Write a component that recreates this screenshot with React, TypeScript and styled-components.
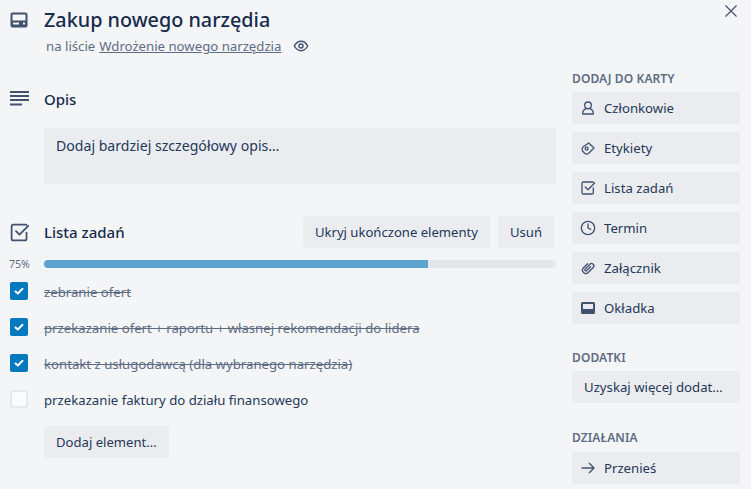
import React from "react";
import styled, { createGlobalStyle } from "styled-components";

const Global = createGlobalStyle`
  html, body { margin: 0; padding: 0; background: #f4f5f7; }
  body { font-family: "Noto Sans", "Open Sans", sans-serif; color: #253858; overflow: hidden; }
`;

const Card = styled.div`
  width: 751px;
  height: 489px;
  position: relative;
  overflow: hidden;
  background: #f4f5f7;
  display: grid;
  grid-template-columns: 556px 168px;
  column-gap: 16px;
`;

const Main = styled.main`
  display: flex;
  flex-direction: column;
  padding-top: 6px;
`;

const Row = styled.div<{ $top?: number }>`
  display: grid;
  grid-template-columns: 44px 1fr;
  align-items: center;
  margin-top: ${(p) => p.$top ?? 0}px;
`;

const IconCell = styled.div`
  display: flex;
  align-items: center;
  padding-left: 9px;
  color: #42526e;
`;

const Title = styled.h1`
  margin: 0;
  font-size: 19.8px;
  line-height: 28px;
  font-weight: 500;
  color: #172b4d;
`;

const Sub = styled.div`
  grid-column: 2;
  display: flex;
  align-items: center;
  padding-left: 2px;
  margin-top: 2px;
  height: 20px;
  font-size: 13.2px;
  color: #5e6c84;
  a {
    color: #5e6c84;
    text-decoration: underline;
    margin-left: 4px;
  }
  svg {
    margin-left: 12px;
  }
`;

const SectionTitle = styled.h2`
  margin: 0;
  font-size: 15px;
  line-height: 24px;
  font-weight: 500;
  color: #172b4d;
  flex: 1;
`;

const DescBox = styled.div`
  grid-column: 2;
  height: 56px;
  box-sizing: border-box;
  padding: 8px 12px;
  background: #ebecf0;
  border-radius: 3px;
  font-size: 14.1px;
  line-height: 20px;
`;

const ChecklistHead = styled.div`
  display: flex;
  align-items: center;
  padding-right: 2px;
`;

const Btn = styled.button<{ $ml?: number }>`
  height: 32px;
  border: 0;
  border-radius: 3px;
  background: #ebecf0;
  padding: 0 12px;
  margin-left: ${(p) => p.$ml ?? 0}px;
  font-family: inherit;
  font-size: 13.1px;
  color: #253858;
  white-space: nowrap;
`;

const ProgressRow = styled.div`
  display: grid;
  grid-template-columns: 44px 1fr;
  align-items: center;
  margin-top: 8px;
  height: 16px;
`;

const Pct = styled.span`
  font-size: 10.5px;
  color: #5e6c84;
  padding-left: 9px;
`;

const Track = styled.div`
  height: 8px;
  background: #e4e6ea;
  border-radius: 4px;
  overflow: hidden;
`;

const Fill = styled.div`
  height: 100%;
  background: #5ba4cf;
`;

const ItemList = styled.div`
  display: flex;
  flex-direction: column;
  margin-top: 1px;
`;

const Item = styled.div`
  display: grid;
  grid-template-columns: 44px 1fr;
  align-items: center;
  height: 36px;
`;

const BoxCell = styled.div`
  padding-left: 10px;
  display: flex;
`;

const Check = styled.span<{ $on?: boolean }>`
  width: 18px;
  height: 18px;
  box-sizing: border-box;
  border-radius: 2px;
  display: flex;
  align-items: center;
  justify-content: center;
  background: ${(p) => (p.$on ? "#0079bf" : "#fafbfc")};
  border: ${(p) => (p.$on ? "0" : "2px solid #e6e8ec")};
`;

const ItemText = styled.span<{ $done?: boolean }>`
  font-size: 13.2px;
  padding-top: 2px;
  color: ${(p) => (p.$done ? "#5e6c84" : "#253858")};
  text-decoration: ${(p) => (p.$done ? "line-through" : "none")};
`;

const AddRow = styled.div`
  padding-left: 44px;
  margin-top: 9px;
`;

const Side = styled.aside`
  display: flex;
  flex-direction: column;
  padding-top: 71px;
`;

const SideLabel = styled.h3<{ $top?: number; $gap?: number }>`
  margin: ${(p) => p.$top ?? 0}px 0 ${(p) => p.$gap ?? 5}px;
  font-size: 12px;
  line-height: 16px;
  font-weight: 600;
  letter-spacing: 0.1px;
  color: #5e6c84;
  text-transform: uppercase;
`;

const SideBtns = styled.div`
  display: flex;
  flex-direction: column;
  gap: 8px;
`;

const SideBtn = styled.button`
  height: 32px;
  border: 0;
  border-radius: 3px;
  background: #ebecf0;
  padding: 0 0 0 8px;
  display: flex;
  align-items: center;
  gap: 8px;
  font-family: inherit;
  font-size: 13.2px;
  color: #253858;
  text-align: left;
  white-space: nowrap;
  svg {
    color: #42526e;
    flex: none;
  }
`;

const PlainSideBtn = styled(SideBtn)`
  padding-left: 12px;
`;

const Close = styled.button`
  position: absolute;
  right: 13px;
  top: 4px;
  width: 14px;
  height: 14px;
  padding: 0;
  border: 0;
  background: none;
  color: #42526e;
  display: flex;
`;

const Ico = ({ size = 16, children }: { size?: number; children: React.ReactNode }) => (
  <svg width={size} height={size} viewBox="0 0 24 24" fill="none" stroke="currentColor" strokeWidth={2} strokeLinecap="round" strokeLinejoin="round">
    {children}
  </svg>
);

const CoverIcon = () => (
  <svg width="20" height="20" viewBox="0 0 20 20" fill="currentColor">
    <path fillRule="evenodd" d="M3.500 2.500h13a2 2 0 0 1 2 2v11a2 2 0 0 1-2 2h-13a2 2 0 0 1-2-2v-11a2 2 0 0 1 2-2zM3.500 4.500v6h13v-6zM4 12.500v2h6v-2zM14 12.500v2h2v-2z" />
  </svg>
);

const ChecklistIcon = ({ size = 16 }: { size?: number }) => (
  <Ico size={size}>
    <path d="M20 12v7a2 2 0 0 1-2 2H5a2 2 0 0 1-2-2V5a2 2 0 0 1 2-2h14a2 2 0 0 1 1 .5" />
    <path d="M8 10.500l4 4 10-10" />
  </Ico>
);

const Tick = () => (
  <svg width="12" height="12" viewBox="0 0 12 12" fill="none" stroke="#fff" strokeWidth="2" strokeLinecap="round" strokeLinejoin="round">
    <path d="M2.500 6.500l2.300 2 4.700-4.700" />
  </svg>
);

const sideActions: { label: string; icon: React.ReactNode }[] = [
  { label: "Członkowie", icon: <Ico><circle cx="12" cy="8" r="5" /><path d="M4 21c0-4 2-7 5-8h6c3 1 5 4 5 8z" /></Ico> },
  { label: "Etykiety", icon: <Ico><path d="M13 4.500l8 7.500-8 8c-2 1.500-4 1.500-6 0l-3-3c-1.500-2-1.500-4 0-6z" /><circle cx="10" cy="13" r="2.200" /></Ico> },
  { label: "Lista zadań", icon: <ChecklistIcon /> },
  { label: "Termin", icon: <Ico><circle cx="12" cy="12" r="10" /><path d="M12 6v6l4 2" /></Ico> },
  { label: "Załącznik", icon: <Ico><g transform="rotate(45 12 12)"><path d="M7 8v8.500a5 5 0 0 0 10 0V6a3.500 3.500 0 0 0-7 0v10a1.700 1.700 0 0 0 3.400 0V8" /></g></Ico> },
  { label: "Okładka", icon: <svg width="16" height="16" viewBox="0 0 16 16" fill="currentColor"><path fillRule="evenodd" d="M2.500 2h11A1.500 1.500 0 0 1 15 3.500v9a1.500 1.500 0 0 1-1.500 1.500h-11A1.500 1.500 0 0 1 1 12.500v-9A1.500 1.500 0 0 1 2.500 2zM3 4v5h10V4H3z" /></svg> },
];

const items = [
  { text: "zebranie ofert", done: true },
  { text: "przekazanie ofert + raportu + własnej rekomendacji do lidera", done: true },
  { text: "kontakt z usługodawcą (dla wybranego narzędzia)", done: true },
  { text: "przekazanie faktury do działu finansowego", done: false },
];

export default function App() {
  return (
    <>
      <Global />
      <Card>
        <Main>
          <Row>
            <IconCell><CoverIcon /></IconCell>
            <Title>Zakup nowego narzędia</Title>
            <Sub>
              na liście <a>Wdrożenie nowego narzędzia</a>
              <svg width="16" height="16" viewBox="0 0 24 24" fill="none" stroke="#42526e" strokeWidth="2.200"><path d="M2 12c2.500-4.500 6-7 10-7s7.500 2.500 10 7c-2.500 4.500-6 7-10 7s-7.500-2.500-10-7z" /><circle cx="12" cy="12" r="3" /></svg>
            </Sub>
          </Row>
          <Row $top={31}>
            <IconCell>
              <svg width="20" height="20" viewBox="0 0 20 20" fill="currentColor"><path d="M1 2h19v2H1zM1 6h19v2H1zM1 10h19v2H1zM1 14.500h12v2H1z" /></svg>
            </IconCell>
            <SectionTitle>Opis</SectionTitle>
          </Row>
          <Row $top={17}>
            <DescBox>Dodaj bardziej szczegółowy opis…</DescBox>
          </Row>
          <Row $top={32}>
            <IconCell><ChecklistIcon size={21} /></IconCell>
            <ChecklistHead>
              <SectionTitle>Lista zadań</SectionTitle>
              <Btn>Ukryj ukończone elementy</Btn>
              <Btn $ml={8}>Usuń</Btn>
            </ChecklistHead>
          </Row>
          <ProgressRow>
            <Pct>75%</Pct>
            <Track><Fill style={{ width: "75%" }} /></Track>
          </ProgressRow>
          <ItemList>
            {items.map((it) => (
              <Item key={it.text}>
                <BoxCell><Check $on={it.done}>{it.done && <Tick />}</Check></BoxCell>
                <ItemText $done={it.done}>{it.text}</ItemText>
              </Item>
            ))}
          </ItemList>
          <AddRow><Btn>Dodaj element…</Btn></AddRow>
        </Main>
        <Side>
          <SideLabel>Dodaj do karty</SideLabel>
          <SideBtns>
            {sideActions.map((a) => (
              <SideBtn key={a.label}>{a.icon}{a.label}</SideBtn>
            ))}
          </SideBtns>
          <SideLabel $top={26}>Dodatki</SideLabel>
          <SideBtns><PlainSideBtn>Uzyskaj więcej dodat…</PlainSideBtn></SideBtns>
          <SideLabel $top={27} $gap={6}>Działania</SideLabel>
          <SideBtns>
            <SideBtn>
              <Ico><path d="M3 12h18M14 5l7 7-7 7" /></Ico>
              Przenieś
            </SideBtn>
          </SideBtns>
        </Side>
        <Close aria-label="Zamknij">
          <Ico size={14}><path d="M3 3l18 18M21 3L3 21" /></Ico>
        </Close>
      </Card>
    </>
  );
}
